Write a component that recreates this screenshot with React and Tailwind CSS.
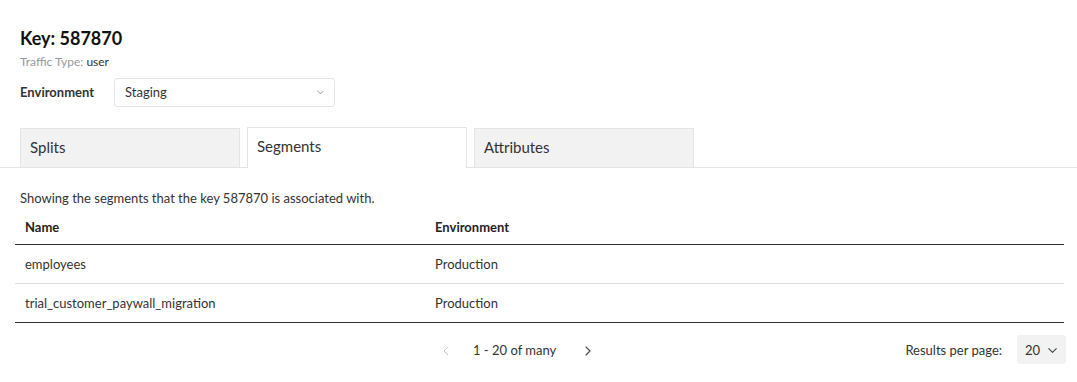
import { ChevronDown, ChevronLeft, ChevronRight } from "lucide-react";

const rows = [
  { name: "employees", env: "Production" },
  { name: "trial_customer_paywall_migration", env: "Production" },
];

const tabs = ["Splits", "Segments", "Attributes"];

export default function App() {
  const active = "Segments";

  return (
    <div className="w-[1077px] h-[382px] bg-white text-[#333] overflow-hidden" style={{ fontFamily: "Lato, 'Noto Sans', sans-serif" }}>
      {/* Header */}
      <div className="px-5 pt-[26px]">
        <h1 className="text-[18px] font-bold leading-[24px] text-[#111]">Key: 587870</h1>
        <p className="mt-[4px] text-[12px] leading-[16px] text-[#999]">
          Traffic Type: <span className="text-[#333]">user</span>
        </p>
        <div className="mt-[8px] flex items-center gap-[16px]">
          <span className="w-[78px] text-[13px] font-bold text-[#333]">Environment</span>
          <div className="w-[221px] h-[29px] border border-[#e4e4e4] rounded-[3px] flex items-center justify-between pl-[10px] pr-[8px]">
            <span className="text-[13px] text-[#333]">Staging</span>
            <ChevronDown size={11} strokeWidth={1.5} className="text-[#667]" />
          </div>
        </div>
      </div>

      {/* Tabs */}
      <div className="mt-[20px] flex items-end gap-[7px] pl-5 border-b border-[#e4e4e4]">
        {tabs.map((t) =>
          t === active ? (
            <div key={t} className="w-[220px] h-[41px] -mb-px bg-white border border-b-0 border-[#e4e4e4] flex items-center pl-[9px] pb-[4px] text-[15px] text-[#333]">
              {t}
            </div>
          ) : (
            <div key={t} className="w-[220px] h-[39px] bg-[#f2f2f2] border border-b-0 border-[#e4e4e4] flex items-center pl-[9px] pb-[2px] text-[15px] text-[#333]">
              {t}
            </div>
          )
        )}
      </div>

      {/* Content */}
      <div className="pl-[15px] pr-[13px]">
        <p className="mt-[21px] pl-[5px] text-[13px] leading-[18px] text-[#333]">
          Showing the segments that the key 587870 is associated with.
        </p>
        <table className="mt-[4px] w-full text-[13px] border-collapse">
          <thead>
            <tr className="border-b border-[#333]">
              <th className="w-[410px] h-[33px] px-[10px] text-left font-bold text-[#222]">Name</th>
              <th className="px-[10px] text-left font-bold text-[#222]">Environment</th>
            </tr>
          </thead>
          <tbody>
            {rows.map((r, i) => (
              <tr key={r.name} className={i === rows.length - 1 ? "border-b border-[#333]" : "border-b border-[#dedede]"}>
                <td className="h-[39px] px-[10px] pt-[2px] text-[#333]">{r.name}</td>
                <td className="px-[10px] pt-[2px] text-[#333]">{r.env}</td>
              </tr>
            ))}
          </tbody>
        </table>

        {/* Pagination */}
        <div className="mt-[12px] -mr-[2px] flex items-center">
          <div className="ml-[423px] flex items-center h-[30px] pt-[2px] text-[13px] text-[#333]">
            <ChevronLeft size={16} strokeWidth={1.5} className="text-[#c8c8c8]" />
            <span className="ml-[19px]">1 - 20 of many</span>
            <ChevronRight size={16} strokeWidth={1.75} className="ml-[24px] text-[#4a4f5a]" />
          </div>
          <div className="flex-1 flex items-center justify-end">
            <span className="pt-[2px] text-[13px] text-[#333]">Results per page:</span>
            <div className="ml-[15px] w-[49px] h-[29px] bg-[#f2f2f2] rounded-[3px] flex items-center justify-between pl-[8px] pr-[6px] pt-[2px] text-[13px] text-[#333]">
              20
              <ChevronDown size={15} strokeWidth={1.75} className="text-[#3d4350]" />
            </div>
          </div>
        </div>
      </div>
    </div>
  );
}
